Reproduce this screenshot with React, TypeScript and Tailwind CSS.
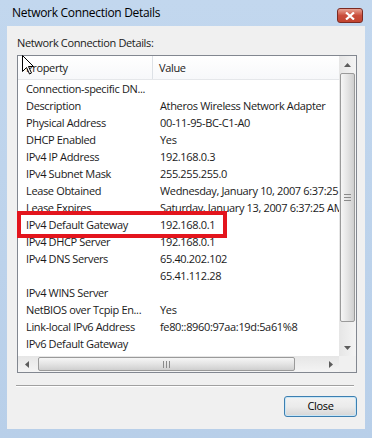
const rows: [string, string][] = [
  ['Connection-specific DN...', ''],
  ['Description', 'Atheros Wireless Network Adapter'],
  ['Physical Address', '00-11-95-BC-C1-A0'],
  ['DHCP Enabled', 'Yes'],
  ['IPv4 IP Address', '192.168.0.3'],
  ['IPv4 Subnet Mask', '255.255.255.0'],
  ['Lease Obtained', 'Wednesday, January 10, 2007 6:37:25 AM'],
  ['Lease Expires', 'Saturday, January 13, 2007 6:37:25 AM'],
  ['IPv4 Default Gateway', '192.168.0.1'],
  ['IPv4 DHCP Server', '192.168.0.1'],
  ['IPv4 DNS Servers', '65.40.202.102'],
  ['', '65.41.112.28'],
  ['IPv4 WINS Server', ''],
  ['NetBIOS over Tcpip En...', 'Yes'],
  ['Link-local IPv6 Address', 'fe80::8960:97aa:19d:5a61%8'],
  ['IPv6 Default Gateway', ''],
  ['IPv6 DNS Servers', ''],
]

function Arrow({ dir }: { dir: 'up' | 'down' | 'left' | 'right' }) {
  const pts = {
    up: '0,4 3.5,0 7,4',
    down: '0,0 3.5,4 7,0',
    left: '4,0 0,3.5 4,7',
    right: '0,0 4,3.5 0,7',
  }[dir]
  const vertical = dir === 'up' || dir === 'down'
  return (
    <svg width={vertical ? 7 : 4} height={vertical ? 4 : 7} viewBox={vertical ? '0 0 7 4' : '0 0 4 7'}>
      <polygon points={pts} fill="#5c5c5c" />
    </svg>
  )
}

function VScrollbar() {
  return (
    <div className="flex w-[17px] flex-col bg-gradient-to-r from-[#e6e6e6] to-[#f4f4f4]">
      <div className="flex h-[17px] items-center justify-center">
        <Arrow dir="up" />
      </div>
      <div className="mx-[1px] flex h-[249px] flex-col items-center justify-center gap-[2px] rounded-[2px] border border-[#9a9a9a] bg-gradient-to-r from-[#f6f6f6] via-[#e4e4e4] to-[#cfcfcf]">
        <div className="h-px w-[7px] bg-[#8a8a8a]" />
        <div className="h-px w-[7px] bg-[#8a8a8a]" />
        <div className="h-px w-[7px] bg-[#8a8a8a]" />
      </div>
      <div className="flex-1" />
      <div className="flex h-[17px] items-center justify-center">
        <Arrow dir="down" />
      </div>
    </div>
  )
}

function HScrollbar() {
  return (
    <div className="flex h-[16px] flex-1 flex-row bg-gradient-to-b from-[#e6e6e6] to-[#f4f4f4]">
      <div className="flex w-[17px] items-center justify-center">
        <Arrow dir="left" />
      </div>
      <div className="my-[1px] ml-[3px] flex w-[257px] flex-row items-center justify-center gap-[2px] rounded-[2px] border border-[#9a9a9a] bg-gradient-to-b from-[#f6f6f6] via-[#e4e4e4] to-[#cfcfcf]">
        <div className="h-[7px] w-px bg-[#8a8a8a]" />
        <div className="h-[7px] w-px bg-[#8a8a8a]" />
        <div className="h-[7px] w-px bg-[#8a8a8a]" />
      </div>
      <div className="flex-1" />
      <div className="flex w-[17px] items-center justify-center">
        <Arrow dir="right" />
      </div>
    </div>
  )
}

export default function App() {
  return (
    <div className="relative flex h-[438px] w-[372px] flex-col bg-gradient-to-b from-[#c2d7ee] to-[#b8cfe9] font-['Open_Sans',sans-serif] text-[11px] tracking-[-0.35px] text-[#1a1a1a]">
      <div className="flex h-[26px] items-start justify-between pl-[12px] pr-[9px]">
        <span className="mt-[4px] text-[12px] leading-[18px] tracking-[-0.3px] text-black">Network Connection Details</span>
        <div className="mt-[8px] flex h-[15px] w-[26px] items-center justify-center rounded-[3px] border border-[#7b2a22] bg-gradient-to-b from-[#e8a294] via-[#c94d3c] to-[#c2442f]">
          <svg width="10" height="8" viewBox="0 0 10 8">
            <path d="M1 0.5 L9 7.5 M9 0.5 L1 7.5" stroke="#ffffff" strokeWidth="2.2" />
          </svg>
        </div>
      </div>

      <div className="mx-[7px] flex h-[403px] flex-col bg-[#f0f0f0] pl-[10px] pr-[8px] pt-[9px]">
        <div className="h-[15px] leading-[15px]">Network Connection Details:</div>

        <div className="mt-[5px] flex h-[318px] flex-col border border-[#828790] bg-white">
          <div className="flex h-[300px] flex-row">
            <div className="flex w-[321px] flex-col overflow-hidden">
              <div className="flex h-[24px] shrink-0 flex-row items-center border-b border-[#e5e7ea] bg-gradient-to-b from-white to-[#f7f8fa]">
                <div className="h-full w-[135px] shrink-0 border-r border-[#dde1e6] pl-[8px] leading-[23px]">Property</div>
                <div className="pl-[6px] leading-[23px]">Value</div>
              </div>
              {rows.map(([name, value], i) => (
                <div key={i} className="flex h-[17px] shrink-0 flex-row items-center whitespace-nowrap leading-[17px]">
                  <div className="w-[135px] shrink-0 pl-[8px]">{name}</div>
                  <div className="pl-[7px]">{value}</div>
                </div>
              ))}
            </div>
            <VScrollbar />
          </div>
          <div className="flex flex-row">
            <HScrollbar />
            <div className="h-[16px] w-[17px] bg-[#f0f0f0]" />
          </div>
        </div>

        <div className="mt-[12px] -ml-[1px] mr-[3px] h-[2px] border-b border-t border-[#a0a0a0] border-b-white" />

        <button className="mt-[9px] flex h-[21px] w-[73px] items-center justify-center self-end rounded-[3px] border border-[#3c7fb1] bg-gradient-to-b from-[#f2f2f2] via-[#ebebeb] to-[#d6d6d6] text-[11px] text-black shadow-[inset_0_0_0_1px_#c9e6f6]">
          Close
        </button>
      </div>

      <div className="absolute left-[17px] top-[211px] h-[27px] w-[210px] border-[4px] border-[#e3151d]" />

      <svg className="absolute left-[22px] top-[55px]" width="13" height="20" viewBox="0 0 13 20">
        <path d="M0.5 0.5 L0.5 16.5 L4.5 12.5 L7.5 19 L9.5 18 L6.5 11.5 L11.5 11.5 Z" fill="#ffffff" stroke="#000000" strokeWidth="1" />
      </svg>
    </div>
  )
}
